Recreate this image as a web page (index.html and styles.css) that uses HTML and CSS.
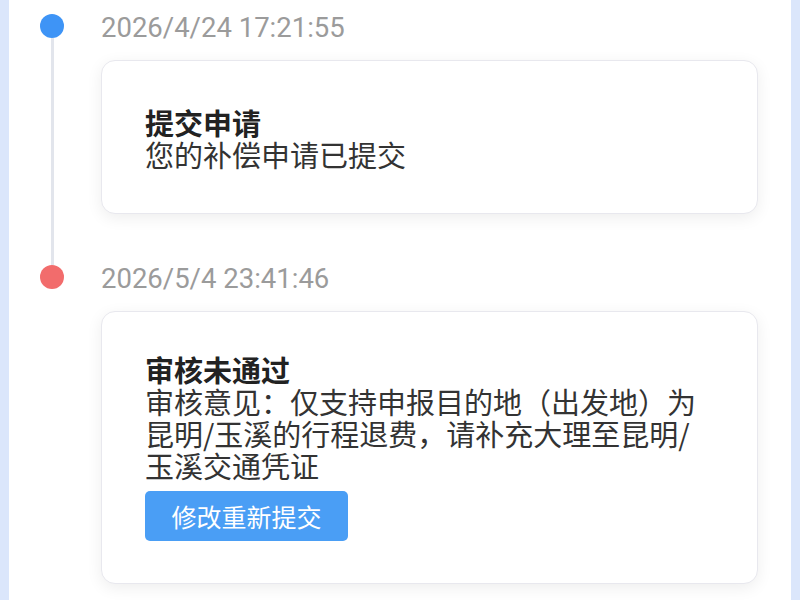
FILE: index.html
```html
<!DOCTYPE html>
<html lang="zh-CN">
<head>
<meta charset="utf-8">
<link rel="stylesheet" href="styles.css">
</head>
<body>
<div class="page">
  <div class="strip"></div>
  <div class="main">
    <div class="item first">
      <div class="rail">
        <span class="dot dot-blue"></span>
        <span class="line"></span>
      </div>
      <div class="content">
        <div class="time">2026/4/24 17:21:55</div>
        <div class="card card-one">
          <div class="title">提交申请</div>
          <div class="desc">您的补偿申请已提交</div>
        </div>
      </div>
    </div>
    <div class="item">
      <div class="rail">
        <span class="dot dot-red"></span>
      </div>
      <div class="content">
        <div class="time">2026/5/4 23:41:46</div>
        <div class="card card-two">
          <div class="title">审核未通过</div>
          <div class="desc">审核意见：仅支持申报目的地（出发地）为<br>昆明/玉溪的行程退费，请补充大理至昆明/<br>玉溪交通凭证</div>
          <button class="btn">修改重新提交</button>
        </div>
      </div>
    </div>
  </div>
  <div class="strip"></div>
</div>
</body>
</html>
```
FILE: styles.css
```css
html, body {
  margin: 0;
  padding: 0;
  background: #ffffff;
}
.page {
  display: flex;
  width: 800px;
  height: 600px;
  overflow: hidden;
  font-family: "Noto Sans CJK SC", "Noto Sans", sans-serif;
}
.strip {
  width: 9px;
  flex: none;
  background: #dbe6fb;
}
.main {
  flex: 1;
  background: #ffffff;
  padding: 14px 33px 0 31px;
}
.item {
  display: flex;
  gap: 37px;
}
.rail {
  width: 24px;
  flex: none;
  display: flex;
  flex-direction: column;
  align-items: center;
}
.dot {
  width: 24px;
  height: 24px;
  border-radius: 50%;
  flex: none;
}
.dot-blue { background: #3e94f6; }
.dot-red { background: #f26c6c; }
.line {
  width: 3px;
  flex: 1;
  background: #e2e5ec;
}
.content {
  flex: 1;
}
.first .content {
  padding-bottom: 51px;
}
.time {
  height: 24px;
  line-height: 28px;
  font-family: Roboto, "Noto Sans", sans-serif;
  font-size: 27.5px;
  color: #9b9b9b;
  white-space: nowrap;
}
.card {
  margin-top: 22px;
  background: #ffffff;
  border: 1px solid #e8e8ee;
  border-radius: 14px;
  box-shadow: 0 4px 16px rgba(0, 0, 0, 0.07);
  padding: 0 30px 0 43px;
  box-sizing: border-box;
}
.card-one {
  height: 154px;
  padding-top: 46px;
}
.card-two {
  height: 273px;
  padding-top: 42px;
}
.title {
  font-size: 29px;
  line-height: 31px;
  font-weight: 700;
  color: #222222;
}
.desc {
  font-size: 29px;
  line-height: 32px;
  color: #333333;
}
.btn {
  display: block;
  margin-top: 10px;
  width: 203px;
  height: 50px;
  border: none;
  border-radius: 5px;
  background: #4a9ef5;
  color: #ffffff;
  font-family: "Noto Sans CJK SC", sans-serif;
  font-size: 25px;
  padding: 0;
}
```
